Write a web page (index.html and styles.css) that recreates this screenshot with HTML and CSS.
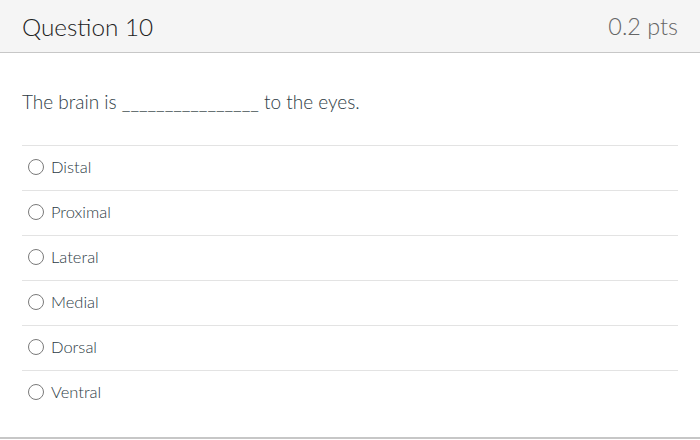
FILE: index.html
```html
<!DOCTYPE html>
<html>
<head>
<meta charset="utf-8">
<link rel="stylesheet" href="styles.css">
</head>
<body>
<div class="question">
  <div class="header">
    <span class="title">Question 10</span>
    <span class="pts">0.2 pts</span>
  </div>
  <div class="content">
    <p class="prompt">The brain is ________________ to the eyes.</p>
    <div class="answers">
      <div class="answer"><span class="radio"></span><span class="label">Distal</span></div>
      <div class="answer"><span class="radio"></span><span class="label">Proximal</span></div>
      <div class="answer"><span class="radio"></span><span class="label">Lateral</span></div>
      <div class="answer"><span class="radio"></span><span class="label">Medial</span></div>
      <div class="answer"><span class="radio"></span><span class="label">Dorsal</span></div>
      <div class="answer"><span class="radio"></span><span class="label">Ventral</span></div>
    </div>
  </div>
</div>
</body>
</html>
```
FILE: styles.css
```css
html, body {
  margin: 0;
  padding: 0;
  background: #ffffff;
}
body {
  font-family: Lato, "Open Sans", sans-serif;
  font-weight: 300;
  color: #2d3b45;
}
.question {
  width: 700px;
  height: 437px;
  border-bottom: 2px solid #c7c7c7;
}
.header {
  background: #f5f5f5;
  border-bottom: 1px solid #c7c7c7;
  display: flex;
  align-items: center;
  justify-content: space-between;
  padding: 0 22px;
  box-sizing: border-box;
  height: 53px;
}
.title {
  font-size: 24.3px;
  color: #222222;
}
.pts {
  font-size: 23.4px;
  color: #666666;
}
.content {
  padding: 0 22px;
}
.prompt {
  margin: 37px 0 31px 0;
  font-size: 19px;
  line-height: 24px;
  color: #2d3b45;
}
.answer {
  box-sizing: border-box;
  height: 45px;
  border-top: 1px solid #e3e3e3;
  display: flex;
  align-items: center;
  padding-left: 6px;
  padding-bottom: 3px;
}
.radio {
  width: 14px;
  height: 14px;
  border: 1.5px solid #7a7a7a;
  border-radius: 50%;
  margin-right: 7px;
  flex-shrink: 0;
}
.label {
  font-size: 16.5px;
  color: #2d3b45;
}
```
